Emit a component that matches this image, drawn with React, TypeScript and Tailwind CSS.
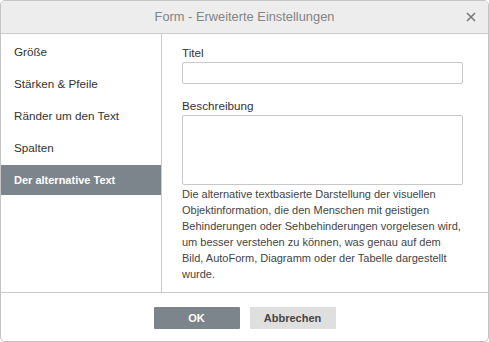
const items = ['Größe', 'Stärken & Pfeile', 'Ränder um den Text', 'Spalten', 'Der alternative Text']

export default function App() {
  return (
    <div
      className="w-[489px] h-[342px] border border-[#c4c4c4] rounded-[5px] bg-white overflow-hidden flex flex-col text-[11px] text-[#444]"
      style={{ fontFamily: '"Liberation Sans", Arial, sans-serif' }}
    >
      <div className="relative h-[33px] shrink-0 bg-[#ededed] border-b border-[#cbcbcb] flex items-center justify-center">
        <span className="text-[12.85px] text-[#848484]">Form - Erweiterte Einstellungen</span>
        <svg className="absolute right-[12px] top-[11px]" width="10" height="10" viewBox="0 0 10 10">
          <path d="M1 1L9 9M9 1L1 9" stroke="#7a7a7a" strokeWidth="1.6" />
        </svg>
      </div>
      <div className="flex h-[259px] shrink-0 border-b border-[#cbcbcb]">
        <div className="w-[161px] shrink-0 border-r border-[#cbcbcb] flex flex-col gap-[2px] pt-[3px]">
          {items.map((it, i) => (
            <div
              key={it}
              className={
                'h-[30px] flex items-center pl-[13px] ' +
                (i === 4 ? 'bg-[#7d858c] text-white font-bold text-[11px]' : 'text-[#333] text-[11.7px]')
              }
            >
              {it}
            </div>
          ))}
        </div>
        <div className="flex-1 pl-[20px] pr-[25px] pt-[11px] flex flex-col">
          <div className="leading-[16px] text-[#333] text-[11.7px]">Titel</div>
          <div className="mt-[1px] h-[22px] border border-[#c8c8c8] rounded-[2px]" />
          <div className="mt-[14px] leading-[16px] text-[#333] text-[11.7px]">Beschreibung</div>
          <div className="mt-[1px] h-[70px] border border-[#c8c8c8] rounded-[2px]" />
          <p className="mt-[1px] leading-[16px] text-[#444]">
            Die alternative textbasierte Darstellung der visuellen Objektinformation, die den Menschen mit geistigen
            Behinderungen oder Sehbehinderungen vorgelesen wird, um besser verstehen zu können, was genau auf dem
            Bild, AutoForm, Diagramm oder der Tabelle dargestellt wurde.
          </p>
        </div>
      </div>
      <div className="flex justify-center gap-[10px] pt-[14px]">
        <button className="w-[86px] h-[22px] rounded-[1px] bg-[#7d858c] text-white font-bold">OK</button>
        <button className="w-[86px] h-[22px] rounded-[1px] bg-[#dfdfdf] text-[#444] font-bold">Abbrechen</button>
      </div>
    </div>
  )
}
